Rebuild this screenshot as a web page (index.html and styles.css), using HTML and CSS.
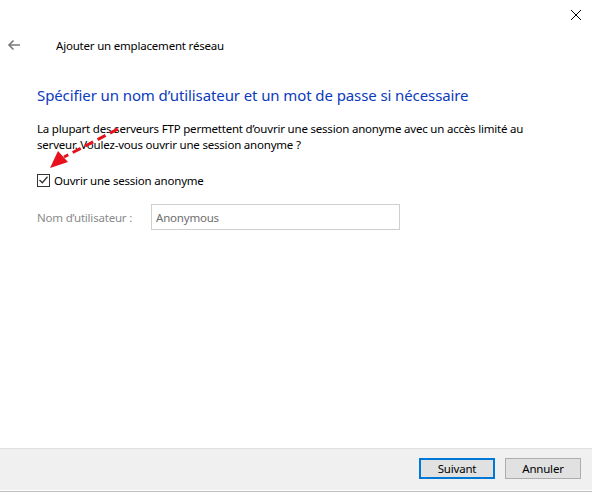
FILE: index.html
```html
<!DOCTYPE html>
<html lang="fr">
<head>
<meta charset="utf-8">
<link rel="stylesheet" href="styles.css">
</head>
<body>
<div class="window">
  <div class="titlebar">
    <svg class="close" width="12" height="12" viewBox="0 0 12 12"><path d="M1 1L11 11M11 1L1 11" stroke="#000" stroke-width="1" fill="none"/></svg>
  </div>
  <div class="nav">
    <svg class="back" width="14" height="12" viewBox="0 0 14 12"><path d="M13 6H2M6.5 1.5L2 6l4.5 4.5" stroke="#7a7a7a" stroke-width="1.6" fill="none"/></svg>
    <span class="navtitle">Ajouter un emplacement réseau</span>
  </div>
  <div class="content">
    <h1 class="heading">Spécifier un nom d’utilisateur et un mot de passe si nécessaire</h1>
    <p class="desc">La plupart des serveurs FTP permettent d’ouvrir une session anonyme avec un accès limité au<br>serveur. Voulez-vous ouvrir une session anonyme ?</p>
    <label class="check">
      <span class="box"><svg width="9" height="8" viewBox="0 0 9 8"><path d="M0.5 4L3.3 6.8L8.5 0.8" stroke="#333" stroke-width="1.3" fill="none"/></svg></span>
      <span>Ouvrir une session anonyme</span>
    </label>
    <div class="field">
      <span class="label">Nom d’utilisateur :</span>
      <span class="input">Anonymous</span>
    </div>
  </div>
  <div class="footer">
    <button class="btn primary">Suivant</button>
    <button class="btn">Annuler</button>
  </div>
  <div class="taskbar"></div>
  <svg class="annot" width="130" height="60" viewBox="0 0 130 60"><path d="M118 8L64 36" stroke="#e8101c" stroke-width="3" stroke-dasharray="9 5" fill="none"/><path d="M50 47L58 30L68 41Z" fill="#e8101c"/></svg>
</div>
</body>
</html>
```

FILE: styles.css
```css
* { box-sizing: border-box; }
html, body { margin: 0; padding: 0; background: #fff; }
body {
  font-family: "Noto Sans", "Open Sans", sans-serif;
  font-size: 11.5px;
  letter-spacing: -0.2px;
  color: #000;
}
.window {
  position: relative;
  width: 592px;
  height: 492px;
  display: flex;
  flex-direction: column;
  overflow: hidden;
}
.titlebar {
  height: 30px;
  display: flex;
  justify-content: flex-end;
  align-items: flex-start;
  padding: 9px 10px 0 0;
}
.close { display: block; }
.nav {
  height: 30px;
  display: flex;
  align-items: center;
  padding-left: 7px;
}
.back { display: block; margin-right: 35px; }
.content {
  flex: 1;
  padding: 24px 0 0 37px;
}
.heading {
  margin: 0;
  font-weight: normal;
  font-size: 15px;
  line-height: 22px;
  color: #0b3bbd;
  letter-spacing: -0.1px;
}
.desc {
  margin: 15px 0 0;
  line-height: 16px;
}
.check {
  display: flex;
  align-items: center;
  margin-top: 19px;
  height: 16px;
}
.box {
  width: 13px;
  height: 13px;
  border: 1px solid #333;
  display: flex;
  align-items: center;
  justify-content: center;
  margin-right: 4px;
}
.box svg { display: block; }
.field {
  display: flex;
  align-items: center;
  margin-top: 16px;
  color: #8a8a8a;
}
.label { width: 114px; }
.input {
  width: 249px;
  height: 26px;
  border: 1px solid #cfcfcf;
  padding: 0 4px;
  display: flex;
  align-items: center;
  color: #6d6d6d;
}
.footer {
  height: 42px;
  background: #f0f0f0;
  border-top: 1px solid #dfdfdf;
  display: flex;
  justify-content: flex-end;
  align-items: flex-start;
  padding: 9px 11px 0 0;
  gap: 10px;
}
.btn {
  font-family: inherit;
  font-size: 11.5px;
  letter-spacing: -0.2px;
  width: 76px;
  height: 21px;
  background: #e1e1e1;
  border: 1px solid #adadad;
  color: #000;
  padding: 0;
  margin: 0;
}
.btn.primary { border: 2px solid #0078d7; }
.taskbar {
  height: 2px;
  border-top: 1px solid #fff;
  background: #bdbdbd;
}
.annot {
  position: absolute;
  left: 0;
  top: 121px;
}
```
